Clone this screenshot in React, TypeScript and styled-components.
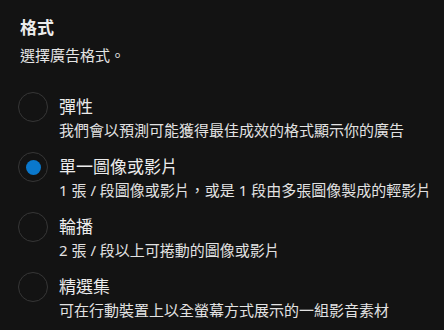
import React, { useState } from "react";
import styled, { createGlobalStyle } from "styled-components";

const GlobalStyle = createGlobalStyle`
  html, body {
    margin: 0;
    padding: 0;
    background: #131313;
  }
  body {
    font-family: "Noto Sans", "Noto Sans CJK TC", sans-serif;
    color: #e8e8e8;
  }
`;

const Panel = styled.div.attrs({ lang: "zh-Hant-TW" })`
  width: 444px;
  height: 330px;
  box-sizing: border-box;
  padding: 16px 20px 0 20px;
  display: flex;
  flex-direction: column;
  background: #131313;
  font-family: "Noto Sans", "Noto Sans CJK TC", sans-serif;
`;

const Heading = styled.div`
  font-size: 17px;
  font-weight: 700;
  line-height: 24px;
  color: #ececec;
`;

const Subtitle = styled.div`
  margin-top: 5px;
  font-size: 15px;
  line-height: 20px;
  color: #e4e4e4;
`;

const OptionList = styled.div`
  margin-top: 27px;
  display: flex;
  flex-direction: column;
  gap: 12px;
`;

const OptionRow = styled.label`
  display: flex;
  align-items: flex-start;
  gap: 11px;
  cursor: pointer;
  margin-left: -2px;
`;

const RadioRing = styled.span<{ $checked: boolean }>`
  flex: none;
  width: 30px;
  height: 30px;
  box-sizing: border-box;
  border-radius: 50%;
  border: 1px solid #363636;
  display: flex;
  align-items: center;
  justify-content: center;
  &::after {
    content: "";
    width: 15px;
    height: 15px;
    border-radius: 50%;
    background: ${(p) => (p.$checked ? "#0a78cc" : "transparent")};
  }
`;

const OptionText = styled.div`
  margin-top: 5px;
  display: flex;
  flex-direction: column;
`;

const OptionTitle = styled.div`
  font-size: 17px;
  line-height: 20px;
  color: #ececec;
`;

const OptionDesc = styled.div`
  margin-top: 3px;
  font-size: 15px;
  line-height: 20px;
  color: #e2e2e2;
  white-space: nowrap;
`;

const options = [
  { title: "彈性", desc: "我們會以預測可能獲得最佳成效的格式顯示你的廣告" },
  { title: "單一圖像或影片", desc: "1 張 / 段圖像或影片，或是 1 段由多張圖像製成的輕影片" },
  { title: "輪播", desc: "2 張 / 段以上可捲動的圖像或影片" },
  { title: "精選集", desc: "可在行動裝置上以全螢幕方式展示的一組影音素材" },
];

export default function App() {
  const [selected, setSelected] = useState(1);
  return (
    <>
      <GlobalStyle />
      <Panel>
        <Heading>格式</Heading>
        <Subtitle>選擇廣告格式。</Subtitle>
        <OptionList>
          {options.map((o, i) => (
            <OptionRow key={o.title} onClick={() => setSelected(i)}>
              <RadioRing $checked={selected === i} />
              <OptionText>
                <OptionTitle>{o.title}</OptionTitle>
                <OptionDesc>{o.desc}</OptionDesc>
              </OptionText>
            </OptionRow>
          ))}
        </OptionList>
      </Panel>
    </>
  );
}
